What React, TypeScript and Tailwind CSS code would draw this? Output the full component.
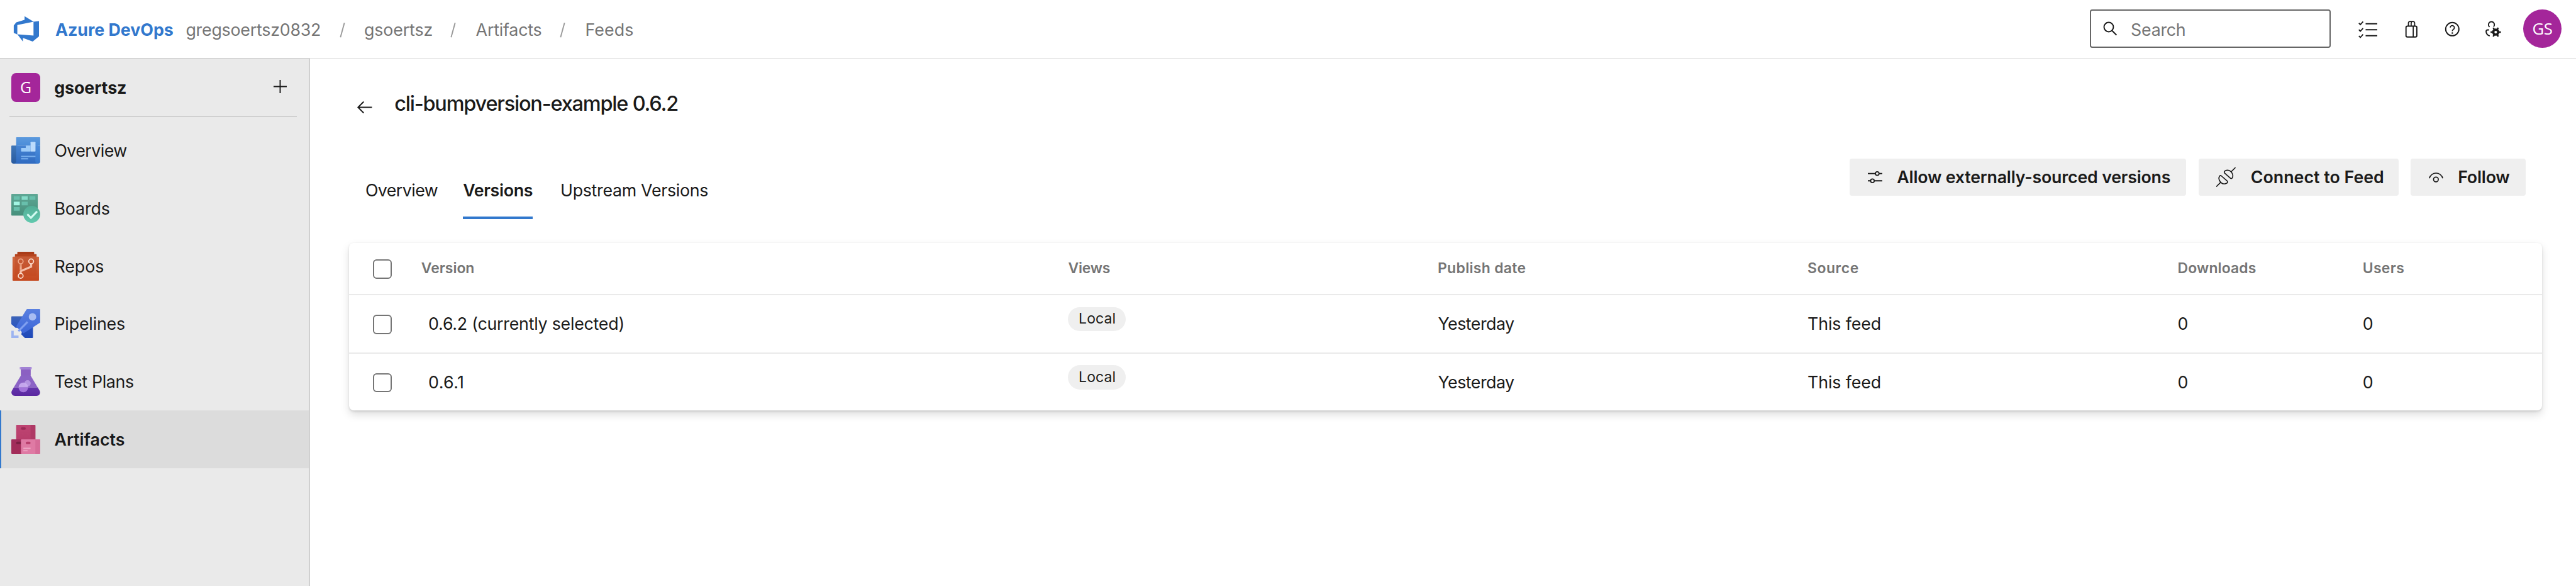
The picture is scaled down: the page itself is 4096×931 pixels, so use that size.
import type { ReactNode } from "react";

function DevOpsLogo() {
  return (
    <svg viewBox="0 0 16 16" className="size-6 shrink-0" fill="#3278cd">
      <path d="M15 3.622v8.512L11.5 15l-5.425-1.975v1.958L3.004 10.97l8.951.7V4.005L15 3.622zm-2.984.428L6.994 1v2.001L2.382 4.356 1 6.13v4.029l1.978.873V5.869l9.038-1.818z" />
    </svg>
  );
}

function Gradient({ id, from, to }: { id: string; from: string; to: string }) {
  return (
    <linearGradient id={id} x1="0" y1="0" x2="0" y2="1">
      <stop offset="0" stopColor={from} />
      <stop offset="1" stopColor={to} />
    </linearGradient>
  );
}

function NavSvg({ children }: { children: ReactNode }) {
  return (
    <svg viewBox="0 0 24 24" className="size-6 shrink-0">
      {children}
    </svg>
  );
}

function OverviewIcon() {
  return (
    <NavSvg>
      <defs>
        <Gradient id="ov-back" from="#3f76b8" to="#285a9f" />
        <Gradient id="ov-top" from="#5c9ade" to="#4a8cd8" />
        <Gradient id="ov-front" from="#4684d2" to="#2f6ac0" />
        <Gradient id="ov-side" from="#4a8bd9" to="#3577cd" />
      </defs>
      <path d="M.5 8H5v15H2a2 2 0 0 1-2-2V8.500a.5.5 0 0 1 .5-.5z" fill="url(#ov-back)" />
      <path d="M4.500 1h19a.5.5 0 0 1 .5.5V8H4V1.500a.5.5 0 0 1 .5-.5z" fill="url(#ov-top)" />
      <path d="M4 8h18v15H2.500A2 2 0 0 0 4 21z" fill="url(#ov-front)" />
      <path d="M20 8h4v13a2 2 0 0 1-4 0z" fill="url(#ov-side)" />
      <path d="M8.500 10H12V8h4v5H8.500a.4.400 0 0 1-.4-.4v-2.200a.4.400 0 0 1 .4-.4z" fill="#9dcbf8" />
      <rect x="16" y="5" width="4.100" height="8" rx=".4" fill="#bcdcfc" />
      <path d="M8.100 16.500h12v1h-12zM8.100 18.500H14v1H8.100z" fill="#79b0ee" />
    </NavSvg>
  );
}

function BoardsIcon() {
  return (
    <NavSvg>
      <defs>
        <Gradient id="bd-board" from="#5fa795" to="#46907c" />
        <Gradient id="bd-check" from="#52ad96" to="#62c9ae" />
      </defs>
      <rect width="22" height="18" rx=".5" fill="url(#bd-board)" />
      <path d="M2 2h5v3H2zM15 2h5v3h-5zM8.600 6.500h5v3h-5zM2 11h5v3H2z" fill="#68bfac" />
      <path d="M8.600 2h5v3h-5z" fill="#86dcc9" />
      <path d="M2 6.500h5v3H2z" fill="#a3f5e3" />
      <circle cx="17" cy="17" r="7" fill="url(#bd-check)" />
      <path d="M13.300 16.900l3 3 5.100-5.300" fill="none" stroke="#d3fbf1" strokeWidth="1.600" />
    </NavSvg>
  );
}

function ReposIcon() {
  return (
    <NavSvg>
      <defs>
        <Gradient id="rp-main" from="#d0673e" to="#c54920" />
        <Gradient id="rp-inner" from="#c65c38" to="#c54b22" />
        <linearGradient id="rp-line" x1="0" y1="10" x2="0" y2="16" gradientUnits="userSpaceOnUse">
          <stop offset="0" stopColor="#e08b68" />
          <stop offset="1" stopColor="#f5c0a8" />
        </linearGradient>
      </defs>
      <rect x="5" width="14" height="4" rx=".5" fill="#a93c19" />
      <rect x="3" y="2" width="18" height="4" rx=".5" fill="#b5431e" />
      <rect x="1" y="4" width="22" height="20" rx=".5" fill="url(#rp-main)" />
      <rect x="3" y="4" width="18" height="16" fill="url(#rp-inner)" />
      <path d="M7 10h1.700v5H7z" fill="url(#rp-line)" />
      <path d="M16.500 10v2.400l-8.700 3.700V18" fill="none" stroke="#f5bfa8" strokeWidth="1.700" />
      <circle cx="7.800" cy="8" r="2" fill="none" stroke="#f0a88a" strokeWidth=".9" />
      <circle cx="16.500" cy="8" r="2" fill="none" stroke="#fbdccd" strokeWidth=".9" />
      <circle cx="7.800" cy="20" r="2" fill="none" stroke="#fbdccd" strokeWidth=".9" />
    </NavSvg>
  );
}

function PipelinesIcon() {
  return (
    <NavSvg>
      <defs>
        <Gradient id="pl-body" from="#5a80e0" to="#3c66d8" />
        <Gradient id="pl-left" from="#3d64b8" to="#2b55c0" />
        <Gradient id="pl-right" from="#2c55bf" to="#1f49b8" />
      </defs>
      <path d="M.5 6H10v9.500H3.500L0 12.600V6.500A.5.5 0 0 1 .5 6z" fill="url(#pl-left)" />
      <path d="M18 13v10.500a.5.5 0 0 1-.5.5h-6.200l-3-3L9 18z" fill="url(#pl-right)" />
      <path d="M13.400 0H23.500a.5.5 0 0 1 .5.5v10.700l-13.300 8.700c-.4.300-.8.200-1.200-.1L4.500 15c-.3-.3-.3-.7-.1-1.200L12.500.5c.2-.3.500-.5.900-.5z" fill="url(#pl-body)" />
      <path d="M13.500 10.700l-7.600 7.700" stroke="#7f9ff0" strokeWidth="1.700" fill="none" />
      <circle cx="17.600" cy="6.500" r="3.100" fill="#a9bdf2" />
      <path d="M0 18h2v4h4v2H0z" fill="#9db4f0" />
    </NavSvg>
  );
}

function TestPlansIcon() {
  return (
    <NavSvg>
      <defs>
        <Gradient id="tp-glass" from="#8a63c4" to="#8c63c6" />
        <Gradient id="tp-liquid" from="#6536ac" to="#5a27a0" />
      </defs>
      <path d="M8 2h8v5l5.900 10H2L8 7z" fill="url(#tp-glass)" />
      <path d="M8 2h8v5H8z" fill="#8b60c2" />
      <path d="M2 17h20l1.600 2.900c.9 1.900-.3 4.100-2.600 4.100H3C.7 24-.5 21.800.4 19.900z" fill="url(#tp-liquid)" />
      <rect x="7" width="10" height="2" rx=".3" fill="#b295de" />
      <path d="M8 0h8v2H8z" fill="#a182d4" />
      <path d="M6 17a4 4 0 0 1 8 0z" fill="#c4a6ec" />
      <path d="M6 17a4 4 0 0 0 8 0z" fill="#a273da" />
      <circle cx="13.500" cy="13.600" r="2.600" fill="#c9aff0" fillOpacity=".65" />
    </NavSvg>
  );
}

function ArtifactsIcon() {
  return (
    <NavSvg>
      <defs>
        <Gradient id="ar-top" from="#be4472" to="#b73d6b" />
        <Gradient id="ar-left" from="#a12c5b" to="#a32c59" />
      </defs>
      <rect x="4" width="16" height="12.500" rx=".5" fill="url(#ar-top)" />
      <path d="M16 0h3.500a.5.5 0 0 1 .5.5V12h-4z" fill="#ae3965" />
      <rect x="8" y="2" width="4" height="2" rx="1" fill="#9a2a56" />
      <rect y="12" width="12" height="12" rx=".5" fill="url(#ar-left)" />
      <path d="M5 14h3v2H5a1 1 0 0 1 0-2z" fill="#7a1e42" />
      <rect x="8" y="12" width="16" height="12" rx=".5" fill="#df7aa4" />
      <path d="M20 12h3.500a.5.5 0 0 1 .5.5v11a.5.5 0 0 1-.5.5H20z" fill="#d66c98" />
      <rect x="12" y="14" width="4" height="2" rx="1" fill="#b83e6c" />
      <path d="M10 19h6v1h-6zM10 21h3.500v1H10z" fill="#eea5c3" />
    </NavSvg>
  );
}

const iconStroke = { fill: "none", stroke: "#1a1a1a", strokeWidth: 1 } as const;

function SearchIcon() {
  return (
    <svg viewBox="0 0 12 12" className="size-3 shrink-0" {...iconStroke}>
      <circle cx="4.700" cy="4.700" r="3.900" />
      <path d="M7.400 7.600l3.800 3.800" />
    </svg>
  );
}

function ChecklistIcon() {
  return (
    <svg viewBox="0 0 16 16" className="size-4 shrink-0" {...iconStroke}>
      <path d="M6 3.500h10M6 8.500h10M6 13.500h10" />
      <path d="M.4 3l1.200 1.300 2.300-2.500M.4 8.400l1.200 1.300 2.300-2.500M.4 13.600l1.200 1.300 2.300-2.500" strokeWidth=".95" />
    </svg>
  );
}

function BagIcon() {
  return (
    <svg viewBox="0 0 16 16" className="size-4 shrink-0" {...iconStroke}>
      <rect x="3.500" y="5.500" width="9" height="9" rx="1.200" />
      <path d="M9.500 5.500v9M5.500 5.500V3a1.300 1.300 0 0 1 1.300-1.400h2.600A1.300 1.300 0 0 1 10.700 3v2.500M7.800 5.500V3c0-.8.500-1.300 1.100-1.400" strokeWidth=".9" />
    </svg>
  );
}

function HelpIcon() {
  return (
    <svg viewBox="0 0 16 16" className="size-4 shrink-0" {...iconStroke}>
      <circle cx="8" cy="8" r="5.500" />
      <path d="M6.300 6.700a1.700 1.700 0 1 1 2.700 1.400c-.6.400-1 .8-1 1.600" strokeWidth=".9" />
      <circle cx="8" cy="11.200" r=".65" fill="#1a1a1a" stroke="none" />
    </svg>
  );
}

function UserSettingsIcon() {
  return (
    <svg viewBox="0 0 16 16" className="size-4 shrink-0" {...iconStroke}>
      <path d="M4.500 6.200a2.450 2.450 0 1 1 3.300-.2" />
      <path d="M4.100 8.600H2.900a1.300 1.300 0 0 0-1.300 1.400c.1 1.700 1.200 3 3 3.700" />
      <circle cx="9.600" cy="10.500" r="2.050" strokeWidth="1.900" />
      <path d="M5.300 10.500h2.200M11.700 10.500h2.200M7.500 6.800l1 1.800M11.700 6.800l-1 1.800M7.500 14.200l1-1.800M11.700 14.200l-1-1.800" strokeWidth="1.300" />
    </svg>
  );
}

function SettingsIcon() {
  return (
    <svg viewBox="0 0 12 12" className="size-3 shrink-0" {...iconStroke}>
      <circle cx="7.800" cy="3" r="1.500" strokeWidth=".9" />
      <circle cx="3.800" cy="9" r="1.500" strokeWidth=".9" />
      <path d="M0 3h6.300M9.300 3H12M0 9h2.300M5.300 9H12" />
    </svg>
  );
}

function ConnectIcon() {
  const half = "M16 0l-3.800 3.800M6.900 4.700c-.5-.7-.3-1.400.4-1.800 1.700-.9 3.700-.6 4.900.6 1.400 1.400 2 3.500 1.100 5.200-.4.700-1.100.7-1.700.1z";
  return (
    <svg viewBox="0 0 16 16" className="size-4 shrink-0" {...iconStroke}>
      <path d={half} strokeWidth=".85" />
      <path d={half} strokeWidth=".85" transform="rotate(180 8 8)" />
    </svg>
  );
}

function FollowIcon() {
  return (
    <svg viewBox="0 0 12 12" className="size-3 shrink-0" {...iconStroke}>
      <path d="M.4 6.900a5.800 5.800 0 0 1 11.200 0" strokeWidth=".85" />
      <circle cx="5.900" cy="7.900" r="2" strokeWidth=".9" />
    </svg>
  );
}

const navItems = [
  { label: "Overview", icon: <OverviewIcon />, text: "tracking-[-0.288px]" },
  { label: "Boards", icon: <BoardsIcon />, text: "tracking-[-0.053px]" },
  { label: "Repos", icon: <ReposIcon />, text: "tracking-[-0.008px]" },
  { label: "Pipelines", icon: <PipelinesIcon />, text: "tracking-[-0.085px]" },
  { label: "Test Plans", icon: <TestPlansIcon />, text: "tracking-[-0.175px]" },
  { label: "Artifacts", icon: <ArtifactsIcon />, text: "font-semibold tracking-[0.011px]", active: true },
];

const versions = [
  { name: "0.6.2 (currently selected)", text: "tracking-[-0.123px]" },
  { name: "0.6.1", text: "tracking-[0.2px]" },
];

function Slash() {
  return (
    <svg viewBox="0 0 20 20" className="h-5 w-5 shrink-0" fill="none" stroke="#9a9a9a" strokeWidth="1">
      <path d="M4 4.300L.700 16.300" />
    </svg>
  );
}

function Header() {
  return (
    <header className="flex h-12 shrink-0 items-center bg-white text-[#757575]">
      <div className="flex w-[46px] pl-2.5">
        <DevOpsLogo />
      </div>
      <div className="flex pt-px">
        <span className="w-[108.500px] font-bold text-[#3278cd]">Azure DevOps</span>
        <span className="w-[127.800px] tracking-[-0.115px]">gregsoertsz0832</span>
        <Slash />
        <span className="w-[72px] pl-[0.500px] tracking-[-0.065px]">gsoertsz</span>
        <Slash />
        <span className="w-[71px] pl-[1.400px] tracking-[-0.098px]">Artifacts</span>
        <Slash />
        <span className="pl-[1.300px] tracking-[0.073px]">Feeds</span>
      </div>
      <div className="ml-auto flex h-8 w-[200px] items-center rounded-[2px] border-[1.05px] border-[#666] pl-[9.500px]">
        <SearchIcon />
        <span className="pt-px pl-[11.300px] tracking-[-0.136px]">Search</span>
      </div>
      <div className="flex w-[160px] items-center pl-[23px]">
        <ChecklistIcon />
        <span className="pl-5"><BagIcon /></span>
        <span className="pl-[18px]"><HelpIcon /></span>
        <span className="pl-[18.500px]"><UserSettingsIcon /></span>
      </div>
      <div className="mr-3 flex size-8 items-center justify-center rounded-full bg-[#a4269a] font-['Open_Sans',sans-serif] text-[13.500px] tracking-[-0.300px] text-white">GS</div>
    </header>
  );
}

function Sidebar() {
  return (
    <aside className="flex w-[258px] shrink-0 flex-col border-t-[1.05px] border-r-[1.05px] border-t-[#d6d6d6] border-r-[#d0d0d0] bg-[#eaeaea]">
      <div className="mr-2.5 ml-2 flex h-12 items-center border-b-[1.05px] border-[#d0d0d0] pl-[1.500px]">
        <div className="flex size-6 items-center justify-center rounded-[4px] bg-[#a4269a] font-['Open_Sans',sans-serif] text-[13px] text-white">G</div>
        <span className="pl-[11.600px] font-bold tracking-[-0.030px]">gsoertsz</span>
        <svg viewBox="0 0 12 12" className="mr-2 mb-px ml-auto size-3" {...iconStroke}>
          <path d="M.5 6h11M6 .5v11" />
        </svg>
      </div>
      <nav className="flex flex-col pt-1">
        {navItems.map((item) => (
          <div
            key={item.label}
            className={
              item.active
                ? "flex h-12 items-center border-l-[1.05px] border-[#3278cd] bg-[#dcdcdc] pl-[8.500px]"
                : "flex h-12 items-center pl-[9.500px]"
            }
          >
            {item.icon}
            <span className={`pl-[11.700px] ${item.text}`}>{item.label}</span>
          </div>
        ))}
      </nav>
    </aside>
  );
}

function Checkbox() {
  return <div className="size-4 rounded-[3px] border-[1.05px] border-[#757575] bg-white" />;
}

function VersionsTable() {
  return (
    <section className="ml-8 w-[1824px] rounded-[4px] bg-white shadow-[0_3.200px_7.200px_rgba(0,0,0,0.13),0_0.600px_1.800px_rgba(0,0,0,0.11)]">
      <div className="flex h-[43px] items-center border-b-[1.05px] border-[#eaeaea] text-xs font-semibold text-[#757575]">
        <div className="w-[60.300px] pt-px pl-5"><Checkbox /></div>
        <div className="w-[538px] tracking-[-0.006px]">Version</div>
        <div className="w-[307.200px] tracking-[-0.114px]">Views</div>
        <div className="w-[307.500px] tracking-[0.171px]">Publish date</div>
        <div className="w-[307.800px] tracking-[0.290px]">Source</div>
        <div className="w-[153.800px] tracking-[0.069px]">Downloads</div>
        <div className="tracking-[0.180px]">Users</div>
      </div>
      {versions.map((version, index) => (
        <div key={version.name} className={index > 0 ? "flex h-12 items-center border-t-[1.05px] border-[#eaeaea]" : "flex h-12 items-center"}>
          <div className="w-[66.200px] pt-px pl-5"><Checkbox /></div>
          <div className={`w-[531.800px] ${version.text}`}>{version.name}</div>
          <div className="flex h-12 w-[307.700px] items-start pt-2.5">
            <span className="flex h-5 w-12 items-center justify-center rounded-full bg-[#efefef] pl-[0.800px] text-xs tracking-[0.077px]">Local</span>
          </div>
          <div className="w-[307.300px] tracking-[-0.257px]">Yesterday</div>
          <div className="w-[307.800px] tracking-[-0.050px]">This feed</div>
          <div className="w-[153.800px]">0</div>
          <div>0</div>
        </div>
      ))}
    </section>
  );
}

function Main() {
  return (
    <main className="flex grow flex-col border-t-[1.05px] border-[#eaeaea] bg-white">
      <div className="flex h-[73px] items-center pl-[38.500px]">
        <svg viewBox="0 0 14 12" className="mt-[7px] h-3 w-3.5 shrink-0" {...iconStroke}>
          <path d="M5.900 1.300L1.200 6l4.700 4.700M1.200 6h11.600" />
        </svg>
        <h1 className="pt-[2px] pl-[17.500px] text-[17px] font-medium tracking-[-0.635px]">cli-bumpversion-example 0.6.2</h1>
      </div>
      <div className="flex h-20 items-start">
        <div className="flex h-[60px] items-end pl-[45.800px]">
          <div className="h-[34px] w-[81.200px] tracking-[-0.288px]">Overview</div>
          <div className="h-[34px] w-[58px] border-b-[2.1px] border-[#3278cd] font-semibold tracking-[-0.166px]">Versions</div>
          <div className="h-[34px] pl-[23px] tracking-[-0.153px]">Upstream Versions</div>
        </div>
        <div className="mt-2.5 mr-[42px] ml-auto flex gap-2.5 font-semibold">
          <button className="flex h-[30.400px] w-[280px] items-center gap-[12.400px] rounded-[2px] bg-[#efefef] pl-[15px] tracking-[-0.105px]">
            <SettingsIcon />
            Allow externally-sourced versions
          </button>
          <button className="flex h-[30.400px] w-[166.500px] items-center gap-[12.500px] rounded-[2px] bg-[#efefef] pl-[15px] tracking-[0.010px]">
            <ConnectIcon />
            Connect to Feed
          </button>
          <button className="flex h-[30.400px] w-[95.500px] items-center gap-[12.300px] rounded-[2px] bg-[#efefef] pl-[15px] tracking-[-0.089px]">
            <FollowIcon />
            Follow
          </button>
        </div>
      </div>
      <VersionsTable />
    </main>
  );
}

export default function App() {
  return (
    <div className="h-[931px] w-[4096px] overflow-hidden bg-white">
      <div className="flex h-[487px] w-[2142px] flex-col font-['Inter','Liberation_Sans',sans-serif] text-sm whitespace-nowrap text-[#1a1a1a] [zoom:1.9122]">
        <Header />
        <div className="flex grow">
          <Sidebar />
          <Main />
        </div>
      </div>
    </div>
  );
}
